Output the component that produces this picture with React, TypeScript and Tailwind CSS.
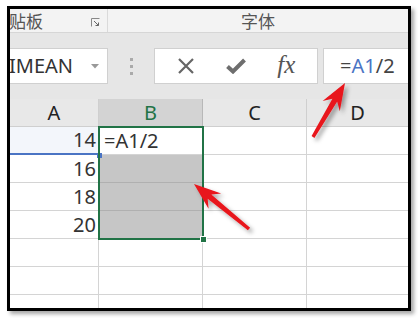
import React from "react";

const latin = "font-['Noto_Sans','Open_Sans',sans-serif]";
const cjk = "font-['Noto_Sans_CJK_SC',sans-serif]";

function arrow(tx: number, ty: number, hx: number, hy: number) {
  const dx = hx - tx;
  const dy = hy - ty;
  const len = Math.hypot(dx, dy);
  const ux = dx / len;
  const uy = dy / len;
  const px = -uy;
  const py = ux;
  const headLen = 27;
  const headW = 10;
  const shaft = 2.8;
  const bx = hx - ux * headLen;
  const by = hy - uy * headLen;
  const nx = hx - ux * (headLen - 7);
  const ny = hy - uy * (headLen - 7);
  const pts = [
    [tx + px * shaft * 0.6, ty + py * shaft * 0.6],
    [nx + px * shaft, ny + py * shaft],
    [bx + px * headW, by + py * headW],
    [hx, hy],
    [bx - px * headW, by - py * headW],
    [nx - px * shaft, ny - py * shaft],
    [tx - px * shaft * 0.6, ty - py * shaft * 0.6],
  ];
  return pts.map((p) => p.map((v) => v.toFixed(1)).join(",")).join(" ");
}

const rows = ["14", "16", "18", "20", "", "", ""];

export default function App() {
  return (
    <div className="w-[418px] h-[318px] bg-white relative overflow-hidden">
      <div className="ml-[7px] mt-[6px] w-[404px] h-[305px] border-[3px] border-black shadow-[3px_3px_4px_rgba(0,0,0,0.35)] overflow-hidden flex flex-col bg-white">
        {/* ribbon group labels */}
        <div className="h-[24px] shrink-0 flex bg-[#f3f3f3] border-b border-[#d6d6d6] text-[#555]">
          <div className="w-[98px] flex items-center justify-between border-r border-[#dadada] pr-[7px]">
            <span className={`${cjk} text-[17px] leading-none -ml-[1px]`}>贴板</span>
            <svg width="9" height="9" viewBox="0 0 9 9" className="mt-[3px]">
              <path d="M0.5 8.5V0.5H8.5" fill="none" stroke="#888" strokeWidth="1" />
              <path d="M3 3L7.5 7.5M7.5 4.5V7.5H4.5" fill="none" stroke="#666" strokeWidth="1" />
            </svg>
          </div>
          <div className="flex-1 flex items-center justify-center">
            <span className={`${cjk} text-[17px] leading-none`}>字体</span>
          </div>
        </div>

        {/* formula bar */}
        <div className="h-[66px] shrink-0 bg-[#e6e6e6] flex items-center">
          <div className="w-[98px] h-[36px] bg-white border border-[#d0d0d0] border-l-0 flex items-center justify-between pr-[8px]">
            <span className={`${latin} text-[20px] text-[#333] leading-none -ml-[1px]`}>IMEAN</span>
            <svg width="8" height="5" viewBox="0 0 8 5">
              <path d="M0 0H8L4 4.5Z" fill="#999" />
            </svg>
          </div>
          <div className="w-[46px] flex flex-col items-center gap-[4px]">
            <span className="w-[3px] h-[3px] bg-[#aaa]" />
            <span className="w-[3px] h-[3px] bg-[#aaa]" />
            <span className="w-[3px] h-[3px] bg-[#aaa]" />
          </div>
          <div className="w-[164px] h-[36px] bg-white border border-[#d0d0d0] flex items-center justify-around px-[6px]">
            <svg width="18" height="18" viewBox="0 0 18 18">
              <path d="M2 2L16 16M16 2L2 16" stroke="#666" strokeWidth="2.2" />
            </svg>
            <svg width="20" height="16" viewBox="0 0 20 16">
              <path d="M1.5 8.5L7 13.5L18.5 2" fill="none" stroke="#6e6e6e" strokeWidth="4" />
            </svg>
            <span className="font-['Liberation_Serif','DejaVu_Serif',serif] italic text-[25px] text-[#555] leading-none -mt-[3px]">fx</span>
          </div>
          <div className="ml-[5px] flex-1 h-[36px] bg-white border border-[#d0d0d0] border-r-0 flex items-center pl-[16px]">
            <span className={`${latin} text-[20px] leading-none text-[#444]`}>
              =<span className="text-[#4a74c4]">A1</span>/2
            </span>
          </div>
        </div>

        {/* sheet */}
        <div className="relative flex-1">
          <div className={`grid grid-cols-[89px_104px_104px_1fr] auto-rows-[28px] ${latin} text-[20px]`}>
            <div className="bg-[#e8e8e8] border-r border-b border-[#cfcfcf] flex items-center justify-center text-[#222]">A</div>
            <div className="bg-[#d3d3d3] border-r border-b border-[#b8b8b8] flex items-center justify-center text-[#217346]">B</div>
            <div className="bg-[#e8e8e8] border-r border-b border-[#cfcfcf] flex items-center justify-center text-[#222]">C</div>
            <div className="bg-[#e8e8e8] border-b border-[#cfcfcf] flex items-center justify-center text-[#222]">D</div>
            {rows.map((v, i) => (
              <React.Fragment key={i}>
                <div
                  className={`border-r flex items-center justify-end pr-[2px] text-[#333] ${
                    i === 0 ? "bg-[#f3f6fb] border-b-2 border-b-[#4a74c4] border-r-[#d4d4d4]" : "border-b border-[#d4d4d4]"
                  }`}
                >
                  {v}
                </div>
                <div
                  className={`border-r border-b border-[#d4d4d4] flex items-center pl-[5px] text-[#333] ${
                    i > 0 && i < 4 ? "bg-[#c6c6c6] border-b-[#b0b0b0]" : "bg-white"
                  }`}
                >
                  {i === 0 ? "=A1/2" : ""}
                </div>
                <div className="border-r border-b border-[#d4d4d4]" />
                <div className="border-b border-[#d4d4d4]" />
              </React.Fragment>
            ))}
          </div>
          {/* A1 reference corner */}
          <div className="absolute left-[87px] top-[54px] w-[5px] h-[5px] bg-[#4a74c4]" />
          {/* selection B1:B4 */}
          <div className="absolute left-[88px] top-[27px] w-[106px] h-[114px] border-2 border-[#217346]" />
          <div className="absolute left-[190px] top-[137px] w-[7px] h-[7px] bg-[#217346] border border-white" />
        </div>
      </div>

      {/* red arrows */}
      <svg className="absolute left-0 top-0" width="418" height="318" viewBox="0 0 418 318">
        <defs>
          <filter id="sh" x="-30%" y="-30%" width="160%" height="160%">
            <feDropShadow dx="3" dy="3" stdDeviation="2" floodColor="#000" floodOpacity="0.35" />
          </filter>
        </defs>
        <polygon points={arrow(313, 137, 345, 83)} fill="#e8141b" filter="url(#sh)" />
        <polygon points={arrow(249, 229, 194, 184)} fill="#e8141b" filter="url(#sh)" />
      </svg>
    </div>
  );
}
